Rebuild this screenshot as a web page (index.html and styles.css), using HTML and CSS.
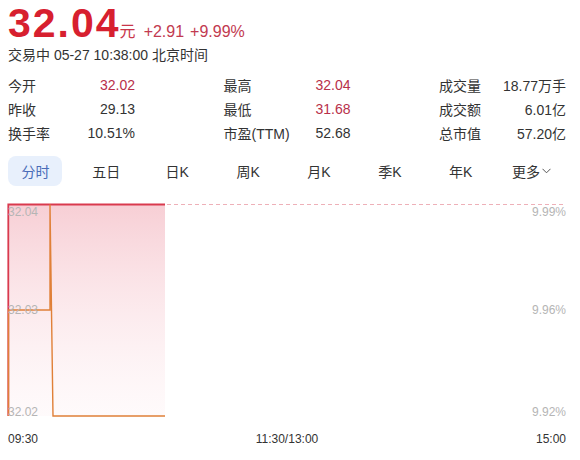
FILE: index.html
```html
<!DOCTYPE html>
<html lang="zh-CN">
<head>
<meta charset="utf-8">
<title>32.04 行情</title>
<link rel="stylesheet" href="styles.css">
</head>
<body>
<div class="quote">
  <div class="price-row">
    <span class="price">32.04</span><span class="unit">元</span>
    <span class="chg">+2.91</span><span class="chg">+9.99%</span>
  </div>
  <div class="meta">交易中 05-27 10:38:00 北京时间</div>

  <div class="stats">
    <div class="stat"><span class="k">今开</span><span class="v up">32.02</span></div>
    <div class="stat"><span class="k">最高</span><span class="v up">32.04</span></div>
    <div class="stat"><span class="k">成交量</span><span class="v">18.77万手</span></div>
    <div class="stat"><span class="k">昨收</span><span class="v">29.13</span></div>
    <div class="stat"><span class="k">最低</span><span class="v up">31.68</span></div>
    <div class="stat"><span class="k">成交额</span><span class="v">6.01亿</span></div>
    <div class="stat"><span class="k">换手率</span><span class="v">10.51%</span></div>
    <div class="stat"><span class="k">市盈(TTM)</span><span class="v">52.68</span></div>
    <div class="stat"><span class="k">总市值</span><span class="v">57.20亿</span></div>
  </div>

  <div class="tabs">
    <div class="tab"><span class="tab-label active">分时</span></div>
    <div class="tab"><span class="tab-label">五日</span></div>
    <div class="tab"><span class="tab-label">日K</span></div>
    <div class="tab"><span class="tab-label">周K</span></div>
    <div class="tab"><span class="tab-label">月K</span></div>
    <div class="tab"><span class="tab-label">季K</span></div>
    <div class="tab"><span class="tab-label">年K</span></div>
    <div class="tab"><span class="tab-label">更多<svg class="chev" width="9" height="6" viewBox="0 0 9 6"><polyline points="0.5,0.8 4.5,4.8 8.5,0.8" fill="none" stroke="#555" stroke-width="1"/></svg></span></div>
  </div>

  <div class="chart">
    <svg class="plot" width="558" height="222" viewBox="0 0 558 222">
      <defs>
        <linearGradient id="area" x1="0" y1="0" x2="0" y2="1">
          <stop offset="0" stop-color="#f6c9d0" stop-opacity="0.9"/>
          <stop offset="1" stop-color="#fdecef" stop-opacity="0.25"/>
        </linearGradient>
      </defs>
      <!-- price area -->
      <rect x="0" y="4.5" width="157" height="211.5" fill="url(#area)"/>
      <!-- limit-up reference -->
      <line x1="159" y1="4.5" x2="557" y2="4.5" stroke="#eeb0b8" stroke-width="1" stroke-dasharray="4 3"/>
      <!-- price line -->
      <polyline points="0.3,216 0.3,4.5 157,4.5" fill="none" stroke="#d93a4e" stroke-width="1.8"/>
      <!-- average line -->
      <polyline points="0.5,216 0.5,110 42,110 42,4.5 45,216 157,216" fill="none" stroke="#e08038" stroke-width="1.4"/>
    </svg>
    <span class="lbl left top">32.04</span>
    <span class="lbl left mid">32.03</span>
    <span class="lbl left bot">32.02</span>
    <span class="lbl right top">9.99%</span>
    <span class="lbl right mid">9.96%</span>
    <span class="lbl right bot">9.92%</span>
  </div>

  <div class="axis">
    <span>09:30</span>
    <span>11:30/13:00</span>
    <span>15:00</span>
  </div>
</div>
</body>
</html>
```

FILE: styles.css
```css
* {
  box-sizing: border-box;
}

html, body {
  margin: 0;
  padding: 0;
  background: #fff;
}

body {
  font-family: "Liberation Sans", "Noto Sans CJK SC", sans-serif;
  color: #333;
}

.quote {
  width: 580px;
  padding: 0 14px 0 8px;
}

/* headline price */
.price-row {
  display: flex;
  align-items: baseline;
  padding-top: 2px;
  height: 45px;
}

.price {
  font-size: 41px;
  font-weight: bold;
  letter-spacing: 2px;
  line-height: 43px;
  color: #d7202f;
}

.unit {
  font-size: 16px;
  color: #c8364a;
  margin-left: -1px;
}

.chg {
  font-size: 16px;
  color: #c23a50;
  margin-left: 8px;
}

.chg + .chg {
  margin-left: 6px;
}

.meta {
  font-size: 14px;
  line-height: 20px;
  color: #333;
}

/* key figures */
.stats {
  margin-top: 8px;
  display: grid;
  grid-template-columns: repeat(3, 127px);
  justify-content: space-between;
  grid-auto-rows: 24px;
  font-size: 14px;
}

.stat {
  display: flex;
  justify-content: space-between;
  align-items: center;
}

.stat .k {
  color: #333;
}

.stat .v {
  color: #333;
}

.stat .v.up {
  color: #b8304a;
}

/* period tabs */
.tabs {
  margin-top: 11px;
  margin-left: -8px;
  width: 567px;
  display: grid;
  grid-template-columns: repeat(8, 1fr);
  height: 30px;
}

.tab {
  display: flex;
  justify-content: center;
  align-items: center;
}

.tab-label {
  display: flex;
  align-items: center;
  justify-content: center;
  font-size: 14px;
  color: #333;
  height: 30px;
}

.tab-label.active {
  width: 54px;
  background: #e8f0fc;
  border-radius: 8px;
  color: #4a6cb8;
}

.chev {
  margin-left: 2px;
}

/* intraday chart */
.chart {
  position: relative;
  margin-top: 14px;
  height: 222px;
}

.plot {
  display: block;
  overflow: visible;
}

.lbl {
  position: absolute;
  font-size: 12px;
  line-height: 14px;
  color: #b5b5b5;
}

.lbl.left { left: 0; }
.lbl.right { right: 0; }
.lbl.top { top: 5px; }
.lbl.mid { top: 103px; }
.lbl.bot { top: 205px; }

.axis {
  margin-top: 9px;
  display: flex;
  justify-content: space-between;
  font-size: 12px;
  line-height: 16px;
  color: #333;
}
```
